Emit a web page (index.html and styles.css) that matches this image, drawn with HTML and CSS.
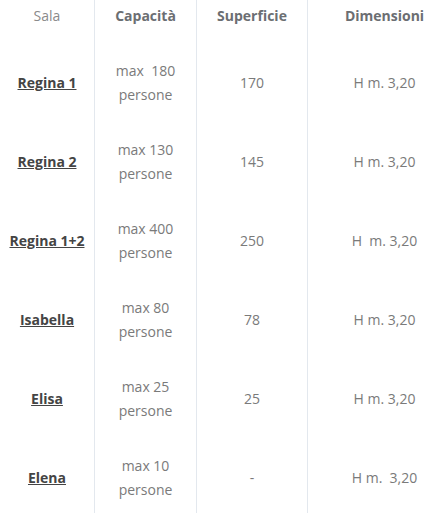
FILE: index.html
```html
<!DOCTYPE html>
<html lang="it">
<head>
<meta charset="utf-8">
<link rel="stylesheet" href="styles.css">
</head>
<body>
<table class="rooms">
  <colgroup>
    <col class="c1"><col class="c2"><col class="c3"><col class="c4">
  </colgroup>
  <thead>
    <tr>
      <th class="plain">Sala</th>
      <th>Capacità</th>
      <th>Superficie</th>
      <th>Dimensioni</th>
    </tr>
  </thead>
  <tbody>
    <tr>
      <td><a href="#">Regina 1</a></td>
      <td>max&nbsp; 180<br>persone</td>
      <td>170</td>
      <td>H m. 3,20</td>
    </tr>
    <tr>
      <td><a href="#">Regina 2</a></td>
      <td>max 130<br>persone</td>
      <td>145</td>
      <td>H m. 3,20</td>
    </tr>
    <tr>
      <td><a href="#">Regina 1+2</a></td>
      <td>max 400<br>persone</td>
      <td>250</td>
      <td>H&nbsp; m. 3,20</td>
    </tr>
    <tr>
      <td><a href="#">Isabella</a></td>
      <td>max 80<br>persone</td>
      <td>78</td>
      <td>H m. 3,20</td>
    </tr>
    <tr>
      <td><a href="#">Elisa</a></td>
      <td>max 25<br>persone</td>
      <td>25</td>
      <td>H m. 3,20</td>
    </tr>
    <tr>
      <td><a href="#">Elena</a></td>
      <td>max 10<br>persone</td>
      <td>-</td>
      <td>H m.&nbsp; 3,20</td>
    </tr>
  </tbody>
</table>
</body>
</html>
```
FILE: styles.css
```css
html, body {
  margin: 0;
  padding: 0;
  background: #fff;
  overflow: hidden;
}
body {
  font-family: "Open Sans", "Liberation Sans", sans-serif;
  font-size: 14px;
  color: #7a7a7a;
}
.rooms {
  table-layout: fixed;
  width: 461px;
  border-collapse: separate;
  border-spacing: 0;
}
.c1 { width: 95px; }
.c2 { width: 102px; }
.c3 { width: 111px; }
.c4 { width: 153px; }
.rooms th,
.rooms td {
  text-align: center;
  vertical-align: middle;
  line-height: 24px;
  padding: 15px 4px 16px;
  border-right: 1px solid #e3e8ee;
}
.rooms th:last-child,
.rooms td:last-child {
  border-right: none;
}
.rooms th {
  padding: 4px 4px 16px;
  font-weight: 700;
  color: #6b6e72;
}
.rooms th.plain {
  font-weight: 400;
  color: #8a8a8a;
}
.rooms a {
  color: #444;
  font-weight: 700;
  text-decoration: underline;
}
```
